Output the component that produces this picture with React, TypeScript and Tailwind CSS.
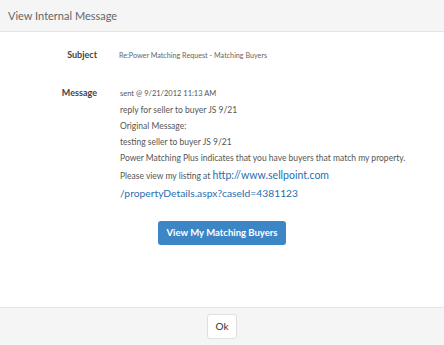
export default function App() {
  return (
    <div className="flex h-[345px] w-[444px] flex-col bg-white font-['Lato',sans-serif] text-[#555]">
      <div className="h-[32px] border-b border-[#e5e5e5] bg-[#f5f5f5] px-2 pt-[8px] text-[11px] leading-[15px] text-[#666]">
        View Internal Message
      </div>
      <div className="flex-1 pt-[16px]">
        <div className="flex items-baseline">
          <div className="w-[97px] text-right text-[9px] font-bold text-[#444]">Subject</div>
          <div className="ml-[22px] text-[7.2px] text-[#666]">Re:Power Matching Request - Matching Buyers</div>
        </div>
        <div className="mt-[22px] flex items-start">
          <div className="w-[97px] pt-[2px] text-right text-[9px] font-bold text-[#444]">Message</div>
          <div className="ml-[23px] mt-[2px] text-[8.5px] leading-[16px]">
            <div className="text-[7.5px]">sent @ 9/21/2012 11:13 AM</div>
            <div>reply for seller to buyer JS 9/21</div>
            <div>Original Message:</div>
            <div>testing seller to buyer JS 9/21</div>
            <div>Power Matching Plus indicates that you have buyers that match my property.</div>
            <div className="leading-[18px]">
              Please view my listing at{' '}
              <span className="text-[10.5px] text-[#1f6fb2]">http://www.sellpoint.com</span>
            </div>
            <div className="text-[10.3px] leading-[17px] text-[#1f6fb2]">/propertyDetails.aspx?caseId=4381123</div>
          </div>
        </div>
        <div className="mt-[19px] flex justify-center">
          <button className="h-[24px] w-[128px] rounded-[3px] bg-[#3d86c6] text-[9.5px] font-bold text-white">
            View My Matching Buyers
          </button>
        </div>
      </div>
      <div className="flex h-[38px] items-center justify-center border-t border-[#e5e5e5] bg-[#f5f5f5]">
        <button className="h-[25px] w-[30px] rounded-[3px] border border-[#e0e0e0] bg-white text-[10px] text-[#333]">
          Ok
        </button>
      </div>
    </div>
  );
}
